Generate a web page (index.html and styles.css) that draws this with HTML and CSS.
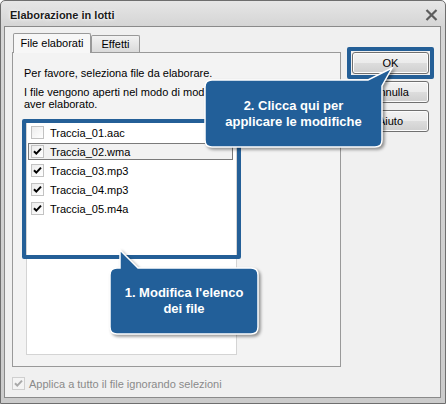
FILE: index.html
```html
<!DOCTYPE html>
<html lang="it">
<head>
	<meta charset="UTF-8">
	<title>Elaborazione in lotti</title>
	<link rel="stylesheet" href="styles.css">
</head>
<body>
	<div class="screen">
		<div class="window">
			<div class="titlebar">
				<span class="title">Elaborazione in lotti</span>
				<svg class="close" width="13" height="12" viewBox="0 0 13 12"><path d="M1.5 1 L11.5 11 M11.5 1 L1.5 11" stroke="#5c5c5c" stroke-width="2.2" fill="none"/></svg>
			</div>
			<div class="client">
				<div class="left">
					<div class="tabs">
						<div class="tab active">File elaborati</div>
						<div class="tab">Effetti</div>
					</div>
					<div class="pane">
						<p class="hint">Per favore, seleziona file da elaborare.</p>
						<p class="hint second">I file vengono aperti nel modo di modifica dopo<br>aver elaborato.</p>
						<ul class="filelist">
							<li><span class="cb"></span>Traccia_01.aac</li>
							<li class="focus"><span class="cb"><svg width="11" height="11" viewBox="0 0 11 11"><path d="M2 5.2 L4.3 7.6 L9 2.6" stroke="#000" stroke-width="2" fill="none"/></svg></span>Traccia_02.wma</li>
							<li><span class="cb"><svg width="11" height="11" viewBox="0 0 11 11"><path d="M2 5.2 L4.3 7.6 L9 2.6" stroke="#000" stroke-width="2" fill="none"/></svg></span>Traccia_03.mp3</li>
							<li><span class="cb"><svg width="11" height="11" viewBox="0 0 11 11"><path d="M2 5.2 L4.3 7.6 L9 2.6" stroke="#000" stroke-width="2" fill="none"/></svg></span>Traccia_04.mp3</li>
							<li><span class="cb"><svg width="11" height="11" viewBox="0 0 11 11"><path d="M2 5.2 L4.3 7.6 L9 2.6" stroke="#000" stroke-width="2" fill="none"/></svg></span>Traccia_05.m4a</li>
						</ul>
					</div>
					<div class="applyall">
						<span class="cb disabled"><svg width="11" height="11" viewBox="0 0 11 11"><path d="M2 5.2 L4.3 7.6 L9 2.6" stroke="#a9a9a9" stroke-width="2" fill="none"/></svg></span>
						Applica a tutto il file ignorando selezioni
					</div>
				</div>
				<div class="buttons">
					<div class="btn">OK</div>
					<div class="btn">Annulla</div>
					<div class="btn">Aiuto</div>
				</div>
			</div>
		</div>

		<div class="mark mark-list"></div>
		<div class="mark mark-ok"></div>

		<div class="callout callout-list">
			<svg width="154" height="92" viewBox="0 0 154 92"><path d="M12 20 L12 2 L30 20 L143 20 Q150 20 150 27 L150 79 Q150 86 143 86 L9 86 Q2 86 2 79 L2 27 Q2 20 9 20 Z" fill="#225f99" stroke="#fff" stroke-width="1.5"/></svg>
			<div class="callout-text">1. Modifica l'elenco<br>dei file</div>
		</div>
		<div class="callout callout-ok">
			<svg width="196" height="92" viewBox="0 0 196 92"><path d="M12 16 L168 16 L192 4 L182 22 L182 76 Q182 83 175 83 L12 83 Q5 83 5 76 L5 23 Q5 16 12 16 Z" fill="#225f99" stroke="#fff" stroke-width="1.5"/></svg>
			<div class="callout-text">2. Clicca qui per<br>applicare le modifiche</div>
		</div>
	</div>
</body>
</html>
```

FILE: styles.css
```css
*{
	margin: 0;
	padding: 0;
	box-sizing: border-box;
}
ul{
	list-style: none;
}
body{
	font-family: "Liberation Sans", Arial, sans-serif;
	font-size: 11px;
	color: #000;
	background: #fff;
}
.screen{
	position: relative;
	width: 446px;
	height: 404px;
}
.window{
	width: 446px;
	height: 404px;
	border: 1px solid #6e6e6e;
	border-radius: 5px 5px 0 0;
	background: linear-gradient(#e6e6e6, #d5d5d5 25px, #cbcbcb);
	padding: 0 4px 5px 3px;
	display: flex;
	flex-direction: column;
}
.titlebar{
	height: 25px;
	display: flex;
	align-items: center;
	justify-content: space-between;
	padding: 3px 3px 0 6px;
}
.title{
	font-weight: bold;
	color: #1b1b1b;
	text-shadow: 0 0 5px #fff, 0 0 2px #fff;
}
.client{
	flex: 1;
	background: #f0f0f0;
	border: 1px solid #8a8a8a;
	display: flex;
	padding: 6px 0 0 7px;
}
.left{
	width: 329px;
	display: flex;
	flex-direction: column;
}
.tabs{
	display: flex;
	align-items: flex-end;
	height: 20px;
	padding-left: 1px;
	margin-bottom: -1px;
	position: relative;
	z-index: 1;
}
.tab{
	height: 17px;
	width: 49px;
	margin-bottom: 1px;
	border: 1px solid #999;
	border-bottom: none;
	background: linear-gradient(#f2f2f2, #e6e6e6 50%, #dadada);
	text-align: center;
	line-height: 16px;
	border-radius: 2px 2px 0 0;
}
.tab.active{
	width: 78px;
	height: 20px;
	margin-bottom: 0;
	background: #f7f7f7;
	line-height: 18px;
}
.pane{
	height: 315px;
	border: 1px solid #999;
	background: #f3f3f3;
	padding: 14px 11px 0 11px;
}
.hint{
	line-height: 12px;
	white-space: nowrap;
}
.hint.second{
	margin-top: 7px;
}
.filelist{
	margin: 11px 0 0 2px;
	width: 211px;
	height: 234px;
	background: #fff;
	border: 1px solid #d4d4d4;
	padding: 2px 3px 0 1px;
}
.filelist li{
	height: 17px;
	margin-bottom: 2px;
	display: flex;
	align-items: center;
	gap: 6px;
	padding-left: 2px;
	border: 1px solid transparent;
}
.filelist li.focus{
	border-color: #7a7a7a;
	background: #f2f2f2;
}
.cb{
	width: 13px;
	height: 13px;
	border: 1px solid #c2c2c2;
	background: linear-gradient(135deg, #ececec, #fff);
	display: flex;
	align-items: center;
	justify-content: center;
	flex-shrink: 0;
}
.applyall{
	margin-top: 10px;
	display: flex;
	align-items: center;
	gap: 4px;
	color: #8a8a8a;
}
.cb.disabled{
	border-color: #cfcfcf;
	background: #f4f4f4;
}
.buttons{
	margin: 19px 0 0 11px;
	display: flex;
	flex-direction: column;
	gap: 7px;
}
.btn{
	width: 77px;
	height: 22px;
	border: 1px solid #707070;
	border-radius: 3px;
	background: linear-gradient(#f2f2f2, #ebebeb 50%, #dddddd 50%, #cfcfcf);
	box-shadow: inset 0 0 0 1px #fcfcfc;
	text-align: center;
	line-height: 20px;
}
.mark{
	position: absolute;
	border: 4px solid #245f97;
	border-radius: 2px;
}
.mark-list{
	left: 22px;
	top: 119px;
	width: 219px;
	height: 140px;
}
.mark-ok{
	left: 347px;
	top: 47px;
	width: 87px;
	height: 32px;
}
.callout{
	position: absolute;
}
.callout svg{
	display: block;
	filter: drop-shadow(2px 2px 1.5px rgba(0, 0, 0, 0.4));
}
.callout-text{
	position: absolute;
	color: #fff;
	font-weight: bold;
	font-size: 13px;
	line-height: 16px;
	text-align: center;
}
.callout-list{
	left: 108px;
	top: 248px;
}
.callout-list .callout-text{
	left: 2px;
	top: 37px;
	width: 148px;
}
.callout-ok{
	left: 200px;
	top: 64px;
}
.callout-ok .callout-text{
	left: 5px;
	top: 34px;
	width: 177px;
}
```
